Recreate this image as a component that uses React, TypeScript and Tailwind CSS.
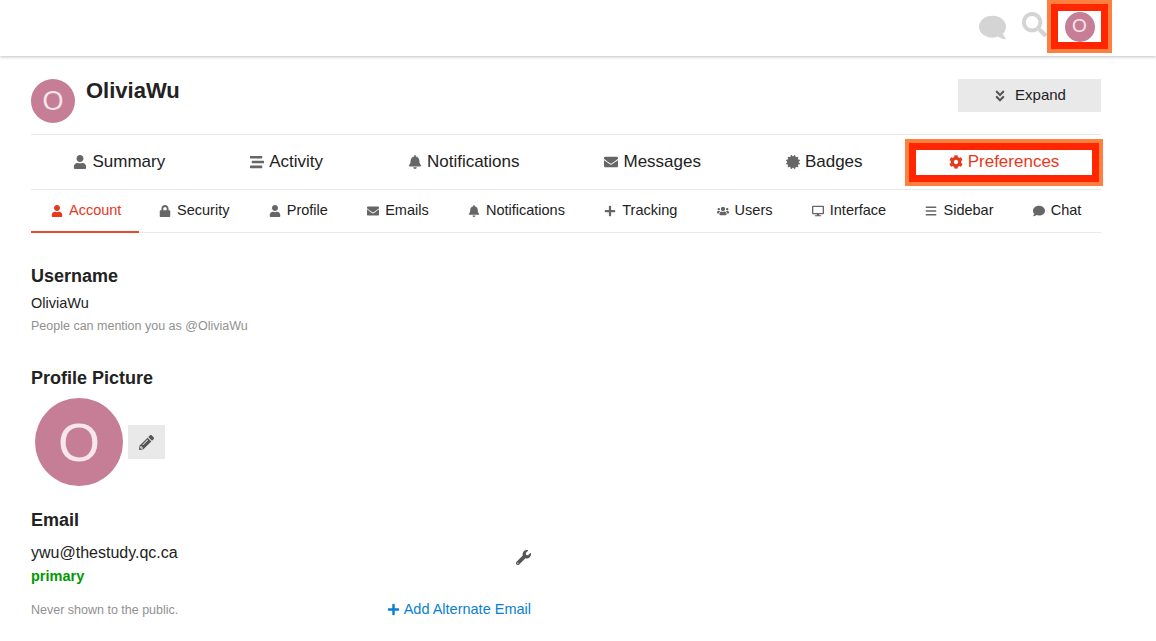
import type { ReactNode } from "react";
import {
  FaAngleDoubleDown,
  FaBars,
  FaBell,
  FaCertificate,
  FaCog,
  FaComment,
  FaDesktop,
  FaEnvelope,
  FaLock,
  FaPencilAlt,
  FaPlus,
  FaSearch,
  FaStream,
  FaUser,
  FaUsers,
  FaWrench,
} from "react-icons/fa";

const mainTabs = [
  { label: "Summary", icon: <FaUser /> },
  { label: "Activity", icon: <FaStream /> },
  { label: "Notifications", icon: <FaBell /> },
  { label: "Messages", icon: <FaEnvelope /> },
  { label: "Badges", icon: <FaCertificate /> },
];

const subTabs = [
  { label: "Security", icon: <FaLock /> },
  { label: "Profile", icon: <FaUser /> },
  { label: "Emails", icon: <FaEnvelope /> },
  { label: "Notifications", icon: <FaBell /> },
  { label: "Tracking", icon: <FaPlus /> },
  { label: "Users", icon: <FaUsers /> },
  { label: "Interface", icon: <FaDesktop /> },
  { label: "Sidebar", icon: <FaBars /> },
  { label: "Chat", icon: <FaComment /> },
];

function Avatar({ className }: { className: string }) {
  return <div className={`flex items-center justify-center rounded-full bg-[#c67d96] text-[#f7e6ec] ${className}`}>O</div>;
}

function MainTab({ icon, label }: { icon: ReactNode; label: string }) {
  return (
    <div className="flex h-full grow items-center justify-center gap-[5px] text-[17px] text-[#222222]">
      <span className="text-[14px] text-[#666666]">{icon}</span>
      {label}
    </div>
  );
}

function SubTab({ icon, label }: { icon: ReactNode; label: string }) {
  return (
    <div className="flex h-full grow items-center justify-center gap-[6px] text-[14.5px] text-[#222222]">
      <span className="text-[12px] text-[#666666]">{icon}</span>
      {label}
    </div>
  );
}

export default function App() {
  return (
    <div className="h-[641px] overflow-hidden bg-white font-['Liberation_Sans',Arial,sans-serif]">
      <header className="flex h-[56px] items-start justify-end pr-[55px] shadow-[0_1px_3px_rgba(0,0,0,0.25)]">
        <FaComment className="mt-[14px] mr-[16px] text-[27px] text-[#d4d4d4] -scale-x-100" />
        <FaSearch className="mt-[12px] mr-[11px] text-[25px] text-[#d4d4d4]" />
        <div className="mt-[11px] flex h-[31px] w-[43px] items-center justify-center bg-white shadow-[0_0_0_7px_#ff2600,0_0_0_11px_#ff7f40]">
          <Avatar className="h-[30px] w-[30px] text-[19px]" />
        </div>
      </header>

      <main className="px-[31px] pr-[55px]">
        <div className="flex h-[79px] items-start justify-between border-b border-[#e9e9e9]">
          <div className="flex items-start pt-[23px]">
            <Avatar className="h-[44px] w-[44px] text-[27px]" />
            <h1 className="ml-[11px] text-[22px] leading-[24px] font-bold text-[#222222]">OliviaWu</h1>
          </div>
          <button className="mt-[23px] flex h-[33px] w-[143px] items-center justify-center gap-[8px] bg-[#e9e9e9] text-[15px] text-[#222222]">
            <FaAngleDoubleDown className="text-[14px] text-[#555555]" />
            Expand
          </button>
        </div>

        <nav className="flex h-[55px] items-center border-b border-[#e9e9e9]">
          {mainTabs.map((tab) => (
            <MainTab key={tab.label} icon={tab.icon} label={tab.label} />
          ))}
          <div className="relative ml-[11px] flex h-[25px] w-[176px] shrink-0 items-center justify-center gap-[5px] bg-white text-[17px] text-[#e8381b] shadow-[0_0_0_7px_#ff2600,0_0_0_11px_#ff7f40]">
            <FaCog className="text-[14px]" />
            Preferences
          </div>
          <div className="w-[9px] shrink-0" />
        </nav>

        <nav className="flex h-[43px] items-stretch border-b border-[#e9e9e9]">
          <div className="-mb-px flex items-center gap-[6px] border-b-2 border-[#e8492c] pr-[18px] pl-[20px] text-[14.5px] text-[#e8381b]">
            <FaUser className="text-[12px]" />
            Account
          </div>
          {subTabs.map((tab) => (
            <SubTab key={tab.label} icon={tab.icon} label={tab.label} />
          ))}
        </nav>

        <section className="mt-[32px]">
          <h2 className="text-[18px] leading-[22px] font-bold text-[#222222]">Username</h2>
          <p className="mt-[7px] text-[14.5px] leading-[18px] text-[#222222]">OliviaWu</p>
          <p className="mt-[6px] text-[12.5px] leading-[16px] text-[#919191]">People can mention you as @OliviaWu</p>
        </section>

        <section className="mt-[33px]">
          <h2 className="text-[18px] leading-[22px] font-bold text-[#222222]">Profile Picture</h2>
          <div className="mt-[9px] flex items-center pl-[4px]">
            <Avatar className="h-[88px] w-[88px] text-[54px]" />
            <div className="ml-[5px] flex h-[34px] w-[37px] items-center justify-center bg-[#e9e9e9] text-[15px] text-[#555555]">
              <FaPencilAlt />
            </div>
          </div>
        </section>

        <section className="mt-[23px] w-[500px]">
          <h2 className="text-[18px] leading-[22px] font-bold text-[#222222]">Email</h2>
          <div className="mt-[9px] flex items-center justify-between text-[16px] leading-[20px] text-[#222222]">
            ywu@thestudy.qc.ca
            <FaWrench className="mt-[10px] text-[15px] text-[#555555]" />
          </div>
          <p className="mt-[2px] text-[14.5px] leading-[18px] font-bold text-[#009900]">primary</p>
          <div className="mt-[14px] flex items-center justify-between">
            <span className="text-[12.5px] leading-[16px] text-[#919191]">Never shown to the public.</span>
            <span className="flex items-center gap-[4px] text-[14.5px] text-[#0a7fd1]">
              <FaPlus className="text-[13px]" />
              Add Alternate Email
            </span>
          </div>
        </section>
      </main>
    </div>
  );
}
